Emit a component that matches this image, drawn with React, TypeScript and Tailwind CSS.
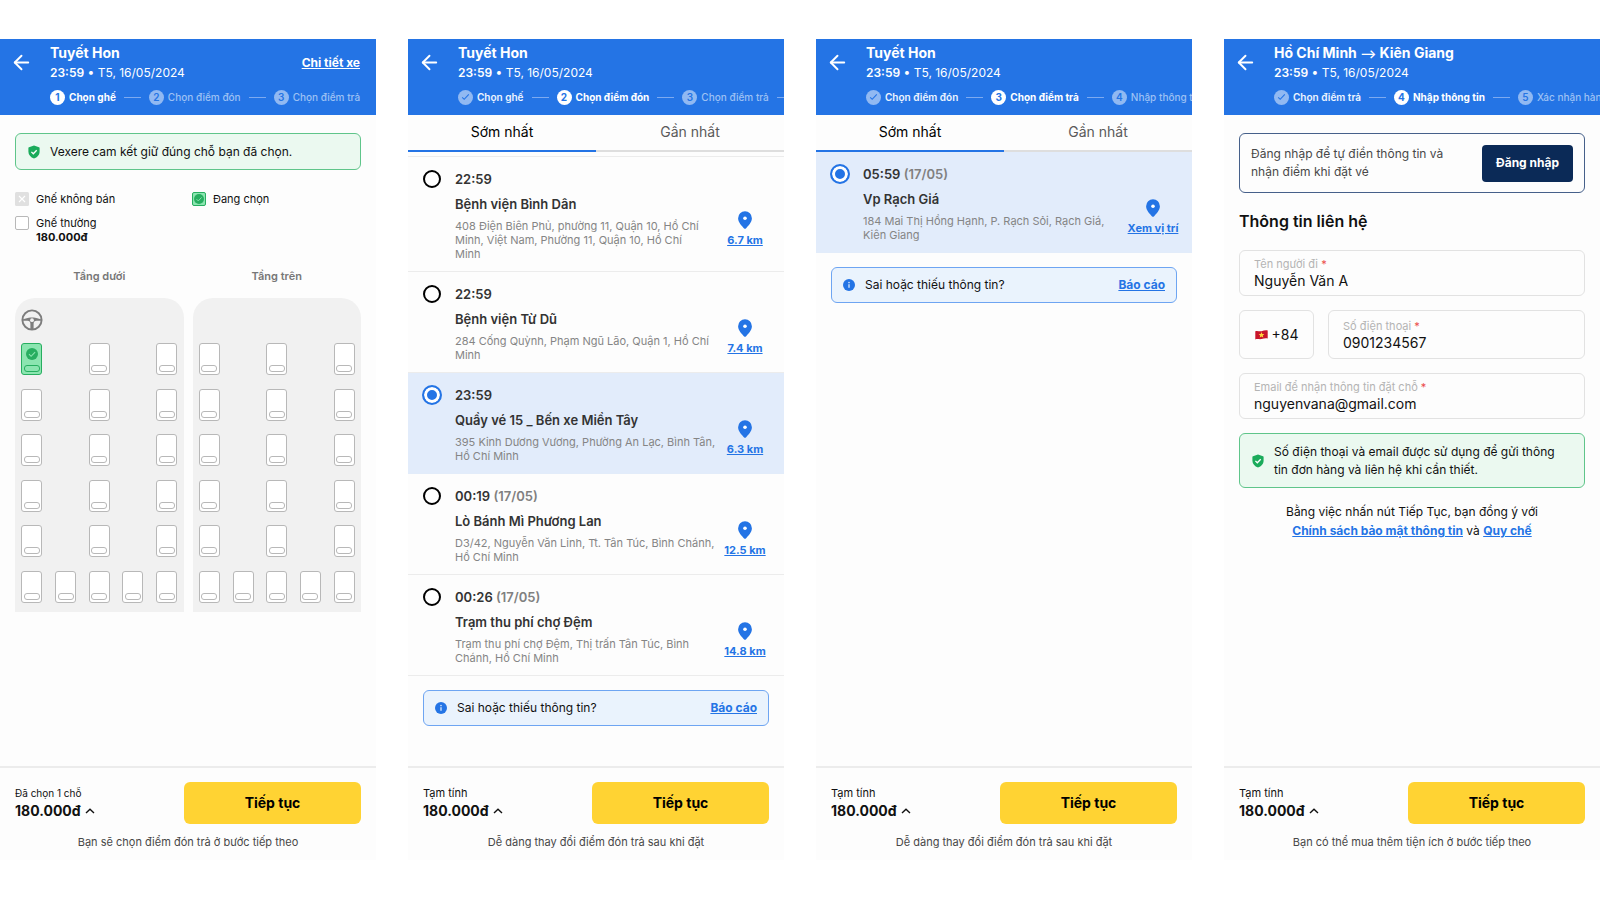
import { useState } from "react";
import type { ReactNode } from "react";
import { ArrowLeft } from "lucide-react";

type Step = { label: string; mark: string; state: "done" | "current" | "next" };

const ShieldIcon = () => (
  <svg width="12" height="14" viewBox="0 0 12 14" className="shrink-0" aria-hidden="true">
    <path
      d="M6 .4 11 2.3c.4.1.6.4.6.8v3.7c0 3-2.3 5.6-5.6 6.8C2.7 12.4.4 9.8.4 6.8V3.1c0-.4.2-.7.6-.8z"
      fill="#1bab5b"
    />
    <path d="m3.4 6.9 1.9 1.9 3.4-3.6" fill="none" stroke="#fff" strokeWidth="1.3" />
  </svg>
);

const InfoIcon = () => (
  <svg width="12" height="12" viewBox="0 0 12 12" className="shrink-0" aria-hidden="true">
    <circle cx="6" cy="6" r="6" fill="#2474e5" />
    <path d="M6 5.2v3.6" stroke="#cfe2fb" strokeWidth="1.4" />
    <circle cx="6" cy="3.5" r=".85" fill="#cfe2fb" />
  </svg>
);

const PinIcon = () => (
  <svg width="14" height="18" viewBox="0 0 14 18" aria-hidden="true">
    <path
      d="M7 .3A6.9 6.9 0 0 0 .1 7.2c0 4.2 3.7 7.5 6 10.2.5.5 1.3.5 1.8 0 2.3-2.7 6-6 6-10.2A6.9 6.9 0 0 0 7 .3z"
      fill="#2474e5"
    />
    <circle cx="7" cy="7.3" r="1.8" fill="#fff" />
  </svg>
);

const WheelIcon = () => (
  <svg width="22" height="22" viewBox="0 0 22 22" aria-hidden="true">
    <circle cx="11" cy="11" r="9.6" fill="none" stroke="#7d7d7d" strokeWidth="1.9" />
    <path
      d="M2 10.2c3-.3 4-1.6 9-1.6s6 1.3 9 1.6v1.6h-4.500c-1.800 0-2.900 1.200-2.900 3V20H9.400v-5.200c0-1.800-1.100-3-2.900-3H2z"
      fill="#7d7d7d"
    />
    <circle cx="11" cy="11.2" r="1.9" fill="#f1f1f1" />
  </svg>
);

const CheckDisc = ({ size }: { size: number }) => (
  <svg width={size} height={size} viewBox="0 0 12 12" aria-hidden="true">
    <circle cx="6" cy="6" r="6" fill="#27ae60" />
    <path d="m3 6.1 2.1 2.2 4-4.2" fill="none" stroke="#8be5b0" strokeWidth="1.1" />
  </svg>
);

const FlagIcon = () => (
  <svg width="13" height="10" viewBox="0 0 13 10" aria-hidden="true">
    <path d="M.3 1.2c2-.9 4 .4 6.200 0S10.700-.1 12.700.6v8c-2-.7-4 .1-6.200.5S2.300 8.500.3 9.400z" fill="#c8152b" />
    <path
      d="m6.500 1.900.8 2 2.100.1-1.600 1.400.5 2.100-1.800-1.100-1.800 1.100.5-2.100L3.600 4l2.100-.1z"
      fill="#ffd43a"
    />
  </svg>
);

function StepBadge({ step }: { step: Step }) {
  return (
    <span
      className={
        step.state === "current"
          ? "flex size-[15px] shrink-0 items-center justify-center rounded-full bg-white text-[10px] font-bold text-[#2474e5]"
          : "flex size-[15px] shrink-0 items-center justify-center rounded-full bg-[#91b9f2] text-[10px] font-semibold text-[#2474e5]"
      }
    >
      {step.state === "done" ? (
        <svg width="9" height="8" viewBox="0 0 9 8" aria-hidden="true">
          <path d="m1.2 4.3 2 2L7.8 1.3" fill="none" stroke="#2474e5" strokeWidth="1.1" />
        </svg>
      ) : (
        step.mark
      )}
    </span>
  );
}

function Header({ title, steps, action }: { title: ReactNode; steps: Step[]; action?: ReactNode }) {
  return (
    <header className="flex h-[76px] shrink-0 overflow-hidden bg-[#2474e5] text-white">
      <button type="button" aria-label="Quay lại" className="mt-[11px] ml-[10px] size-6 shrink-0">
        <ArrowLeft size={23} strokeWidth={2} />
      </button>
      <div className="ml-4 flex min-w-0 flex-1 flex-col pt-1">
        <div className="flex items-center justify-between pr-4">
          <div>
            <h1 className="text-sm leading-5 font-bold">{title}</h1>
            <p className="text-xs leading-[19px]">
              <span className="font-semibold">23:59</span> • T5, 16/05/2024
            </p>
          </div>
          {action}
        </div>
        <ol className="mt-[7px] flex items-center gap-2 overflow-hidden leading-4 whitespace-nowrap">
          {steps.map((s, i) => (
            <li key={s.label} className="flex shrink-0 items-center gap-1">
              {i > 0 && <span className="mr-1 h-px w-[17px] bg-[#7daaf0]" />}
              <StepBadge step={s} />
              <span
                className={
                  s.state === "current"
                    ? "text-[10px] font-bold text-white"
                    : s.state === "done"
                      ? "text-[10px] font-semibold text-[#edf4ff]"
                      : "text-[10px] font-medium text-[#9dc1f4]"
                }
              >
                {s.label}
              </span>
            </li>
          ))}
        </ol>
      </div>
    </header>
  );
}

function Footer({ caption, small, note }: { caption: string; small?: boolean; note: string }) {
  return (
    <footer className="shrink-0 border-t-2 border-[#ececec] px-[15px] pt-[14px] pb-[10px]">
      <div className="flex items-center justify-between">
        <div>
          <p className={small ? "text-[10px] leading-4" : "text-[11px] leading-4"}>{caption}</p>
          <button type="button" className="flex items-center gap-1 text-sm leading-5 font-bold">
            180.000đ
            <svg width="10" height="6" viewBox="0 0 10 6" aria-hidden="true">
              <path d="M1 5 5 1.2 9 5" fill="none" stroke="#111" strokeWidth="1.4" />
            </svg>
          </button>
        </div>
        <button type="button" className="h-[42px] w-[177px] rounded-md bg-[#ffd333] text-sm font-bold text-black">
          Tiếp tục
        </button>
      </div>
      <p className="mt-[10px] text-center text-[11px] leading-4 text-[#484848]">{note}</p>
    </footer>
  );
}

function Screen({ children }: { children: ReactNode }) {
  return <section className="flex min-w-0 flex-col bg-[#fdfdfd]">{children}</section>;
}

function Tabs() {
  return (
    <div role="tablist" className="grid grid-cols-2 text-sm leading-5">
      <button type="button" role="tab" aria-selected="true" className="h-[37px] border-b-2 border-[#2474e5] pb-[2px] text-center text-black">
        Sớm nhất
      </button>
      <button type="button" role="tab" aria-selected="false" className="h-[37px] border-b-2 border-[#dedede] pb-[2px] text-center text-[#5a5a5a]">
        Gần nhất
      </button>
    </div>
  );
}

type Stop = { time: string; date?: string; name: string; address: string; link: string };

function StopItem({ stop, group, selected, onSelect }: { stop: Stop; group: string; selected: boolean; onSelect: () => void }) {
  const id = `${group}-${stop.link}`;
  return (
    <li
      className={
        selected
          ? "flex border-b border-[#e2ecfa] bg-[#e2ecfb] pt-3 pb-[10px] pl-[14px]"
          : "flex border-b border-[#ececec] pt-3 pb-[10px] pl-[14px]"
      }
    >
      <input
        type="radio"
        id={id}
        name={group}
        checked={selected}
        onChange={onSelect}
        className="m-px size-[18px] shrink-0 appearance-none rounded-full border-2 border-black bg-white checked:m-0 checked:size-5 checked:border-[#2474e5] checked:bg-[#2474e5] checked:shadow-[inset_0_0_0_3px_white]"
      />
      <div className="ml-[13px] min-w-0 flex-1">
        <p className="text-[13px] leading-5 font-semibold text-[#333]">
          {stop.time} {stop.date && <span className="text-[#808080]">({stop.date})</span>}
        </p>
        <div className="mt-[5px] flex items-center">
          <label htmlFor={id} className="block min-w-0 flex-1">
            <span className="block text-[13px] leading-5 font-semibold text-[#333]">{stop.name}</span>
            <span className="mt-[5px] block text-[11px] leading-[14px] whitespace-pre-line text-[#858585]">{stop.address}</span>
          </label>
          <a
            href="#map"
            className="mr-[13px] flex w-[52px] shrink-0 flex-col items-center gap-[3px] pt-1 text-[11px] leading-4 font-bold whitespace-nowrap text-[#2474e5] underline"
          >
            <PinIcon />
            {stop.link}
          </a>
        </div>
      </div>
    </li>
  );
}

function StopList({ stops, group, initial }: { stops: Stop[]; group: string; initial: number }) {
  const [picked, setPicked] = useState(initial);
  return (
    <ul>
      {stops.map((s, i) => (
        <StopItem key={s.link} stop={s} group={group} selected={i === picked} onSelect={() => setPicked(i)} />
      ))}
    </ul>
  );
}

function Report() {
  return (
    <div className="mx-[15px] mt-[14px] flex h-9 items-center rounded-md border border-[#6ea5f2] bg-[#eaf3fd] px-[11px] text-xs">
      <InfoIcon />
      <span className="ml-[10px] flex-1 text-[#111]">Sai hoặc thiếu thông tin?</span>
      <a href="#report" className="font-bold text-[#2474e5] underline">
        Báo cáo
      </a>
    </div>
  );
}

function Seat({ selected, label }: { selected?: boolean; label: string }) {
  return (
    <button
      type="button"
      aria-label={label}
      aria-pressed={!!selected}
      className={
        selected
          ? "flex h-8 w-[21px] flex-col items-center justify-between rounded-[3px] border border-[#27ae60] bg-[#8be5b0] pt-1 pb-[2px]"
          : "flex h-8 w-[21px] flex-col items-center justify-end rounded-[3px] border border-[#b8b8b8] bg-white pb-[2px]"
      }
    >
      {selected && <CheckDisc size={12} />}
      <span className={selected ? "h-[7px] w-4 rounded-[3px] border border-[#27ae60]" : "h-[7px] w-4 rounded-[3px] border border-[#b8b8b8]"} />
    </button>
  );
}

function Deck({ name, driver }: { name: string; driver?: boolean }) {
  const rows = [0, 1, 2, 3, 4, 5];
  const cols = [0, 1, 2, 3, 4];
  return (
    <div>
      <h2 className="text-center text-[11px] leading-4 font-semibold text-[#777]">{name}</h2>
      <div className="mt-[14px] grid h-[314px] grid-cols-5 grid-rows-[41px_repeat(6,1fr)] justify-items-center rounded-t-[20px] bg-[#f1f1f1]">
        <div className="col-span-5 justify-self-start pt-[11px] pl-[6px]">{driver && <WheelIcon />}</div>
        {rows.map((r) =>
          cols.map((c) => (
            <div key={`${r}-${c}`} className="pt-1">
              {(r === 5 || c % 2 === 0) && <Seat label={`${name}, hàng ${r + 1}, ghế ${c + 1}`} selected={driver && r === 0 && c === 0} />}
            </div>
          )),
        )}
      </div>
    </div>
  );
}

function Field({ id, label, value, type, tall }: { id: string; label: string; value: string; type: string; tall?: boolean }) {
  return (
    <div
      className={
        tall
          ? "flex h-[49px] min-w-0 flex-1 flex-col justify-center rounded-md border border-[#e2e2e2] px-[14px]"
          : "flex h-[46px] min-w-0 flex-col justify-center rounded-md border border-[#e2e2e2] px-[14px]"
      }
    >
      <label htmlFor={id} className="text-[11px] leading-4 text-[#b4b4b4]">
        {label} <span className="text-[#eb4b4b]">*</span>
      </label>
      <input id={id} type={type} defaultValue={value} className="w-full bg-transparent text-sm leading-[18px] text-[#111] outline-none" />
    </div>
  );
}

const pickups: Stop[] = [
  {
    time: "22:59",
    name: "Bệnh viện Bình Dân",
    address: "408 Điện Biên Phủ, phường 11, Quận 10, Hồ Chí\nMinh, Việt Nam, Phường 11, Quận 10, Hồ Chí\nMinh",
    link: "6.7 km",
  },
  { time: "22:59", name: "Bệnh viện Từ Dũ", address: "284 Cống Quỳnh, Phạm Ngũ Lão, Quận 1, Hồ Chí\nMinh", link: "7.4 km" },
  { time: "23:59", name: "Quầy vé 15 _ Bến xe Miền Tây", address: "395 Kinh Dương Vương, Phường An Lạc, Bình Tân,\nHồ Chí Minh", link: "6.3 km" },
  { time: "00:19", date: "17/05", name: "Lò Bánh Mì Phương Lan", address: "D3/42, Nguyễn Văn Linh, Tt. Tân Túc, Bình Chánh,\nHồ Chí Minh", link: "12.5 km" },
  { time: "00:26", date: "17/05", name: "Trạm thu phí chợ Đệm", address: "Trạm thu phí chợ Đệm, Thị trấn Tân Túc, Bình\nChánh, Hồ Chí Minh", link: "14.8 km" },
];

const dropoffs: Stop[] = [
  { time: "05:59", date: "17/05", name: "Vp Rạch Giá", address: "184 Mai Thị Hồng Hạnh, P. Rạch Sỏi, Rạch Giá,\nKiên Giang", link: "Xem vị trí" },
];

export default function App() {
  return (
    <main className="grid min-h-screen grid-cols-4 gap-x-8 bg-white pt-[39px] pb-10 font-[Inter,'Noto_Sans',sans-serif] text-[#111]">
      <Screen>
        <Header
          title="Tuyết Hon"
          action={
            <a href="#bus" className="text-xs font-bold underline">
              Chi tiết xe
            </a>
          }
          steps={[
            { label: "Chọn ghế", mark: "1", state: "current" },
            { label: "Chọn điểm đón", mark: "2", state: "next" },
            { label: "Chọn điểm trả", mark: "3", state: "next" },
          ]}
        />
        <div className="flex-1 px-[15px] pt-[18px]">
          <div className="flex h-[37px] items-center gap-[10px] rounded-md border border-[#5fc58a] bg-[#ebf9f0] px-3 text-xs">
            <ShieldIcon />
            <p>Vexere cam kết giữ đúng chỗ bạn đã chọn.</p>
          </div>
          <ul className="mt-[21px] grid grid-cols-2 gap-x-2 gap-y-2 text-[11px] leading-4">
            <li className="flex gap-[7px]">
              <svg width="14" height="14" viewBox="0 0 14 14" className="mt-px" aria-hidden="true">
                <rect width="14" height="14" rx="1.5" fill="#e0e0e0" />
                <path d="m4 4 6 6m0-6-6 6" stroke="#fff" strokeWidth="1.1" />
              </svg>
              Ghế không bán
            </li>
            <li className="flex gap-[7px]">
              <span className="mt-px flex size-[14px] items-center justify-center rounded-[2px] border border-[#27ae60] bg-[#8be5b0]">
                <CheckDisc size={10} />
              </span>
              Đang chọn
            </li>
            <li className="flex gap-[7px]">
              <span className="mt-px size-[14px] rounded-[2px] border border-[#b8b8b8] bg-white" />
              <div className="leading-[14px]">
                <p className="pt-px">Ghế thường</p>
                <p className="font-bold">180.000đ</p>
              </div>
            </li>
          </ul>
          <div className="mt-6 grid grid-cols-2 gap-[9px]">
            <Deck name="Tầng dưới" driver />
            <Deck name="Tầng trên" />
          </div>
        </div>
        <Footer caption="Đã chọn 1 chỗ" small note="Bạn sẽ chọn điểm đón trả ở bước tiếp theo" />
      </Screen>

      <Screen>
        <Header
          title="Tuyết Hon"
          steps={[
            { label: "Chọn ghế", mark: "1", state: "done" },
            { label: "Chọn điểm đón", mark: "2", state: "current" },
            { label: "Chọn điểm trả", mark: "3", state: "next" },
            { label: "Nhập thông tin", mark: "4", state: "next" },
          ]}
        />
        <div className="flex-1">
          <Tabs />
          <div className="mt-1 border-t border-[#ececec]">
            <StopList stops={pickups} group="pickup" initial={2} />
          </div>
          <Report />
        </div>
        <Footer caption="Tạm tính" note="Dễ dàng thay đổi điểm đón trả sau khi đặt" />
      </Screen>

      <Screen>
        <Header
          title="Tuyết Hon"
          steps={[
            { label: "Chọn điểm đón", mark: "2", state: "done" },
            { label: "Chọn điểm trả", mark: "3", state: "current" },
            { label: "Nhập thông tin", mark: "4", state: "next" },
          ]}
        />
        <div className="flex-1">
          <Tabs />
          <StopList stops={dropoffs} group="dropoff" initial={0} />
          <Report />
        </div>
        <Footer caption="Tạm tính" note="Dễ dàng thay đổi điểm đón trả sau khi đặt" />
      </Screen>

      <Screen>
        <Header
          title={
            <>
              Hồ Chí Minh <span className="text-xs font-semibold">⟶</span> Kiên Giang
            </>
          }
          steps={[
            { label: "Chọn điểm trả", mark: "3", state: "done" },
            { label: "Nhập thông tin", mark: "4", state: "current" },
            { label: "Xác nhận hành khách", mark: "5", state: "next" },
          ]}
        />
        <div className="flex-1 px-[15px] pt-[18px]">
          <div className="flex h-[60px] items-center justify-between rounded-md border border-[#46608a] px-[11px]">
            <p className="max-w-[205px] text-xs leading-[18px] text-[#484848]">Đăng nhập để tự điền thông tin và nhận điểm khi đặt vé</p>
            <button type="button" className="h-[37px] w-[91px] rounded-[4px] bg-[#0b2a57] text-xs font-bold text-white">
              Đăng nhập
            </button>
          </div>
          <h2 className="mt-4 text-base leading-6 font-semibold text-[#111]">Thông tin liên hệ</h2>
          <form className="mt-[17px] flex flex-col gap-[14px]">
            <Field id="name" label="Tên người đi" value="Nguyễn Văn A" type="text" />
            <div className="flex gap-[14px]">
              <button type="button" className="flex h-[49px] w-[75px] items-center justify-center gap-1 rounded-md border border-[#e2e2e2] text-sm">
                <FlagIcon />
                +84
              </button>
              <Field id="phone" label="Số điện thoại" value="0901234567" type="tel" tall />
            </div>
            <Field id="email" label="Email để nhận thông tin đặt chỗ" value="nguyenvana@gmail.com" type="email" />
          </form>
          <div className="mt-[14px] flex h-[55px] items-center gap-[10px] rounded-md border border-[#5fc58a] bg-[#ebf9f0] pr-6 pl-3 text-xs leading-[18px]">
            <ShieldIcon />
            <p>Số điện thoại và email được sử dụng để gửi thông tin đơn hàng và liên hệ khi cần thiết.</p>
          </div>
          <p className="mt-[14px] text-center text-xs leading-[19px]">
            Bằng việc nhấn nút Tiếp Tục, bạn đồng ý với
            <br />
            <a href="#privacy" className="font-bold text-[#2474e5] underline">
              Chính sách bảo mật thông tin
            </a>{" "}
            và{" "}
            <a href="#terms" className="font-bold text-[#2474e5] underline">
              Quy chế
            </a>
          </p>
        </div>
        <Footer caption="Tạm tính" note="Bạn có thể mua thêm tiện ích ở bước tiếp theo" />
      </Screen>
    </main>
  );
}
